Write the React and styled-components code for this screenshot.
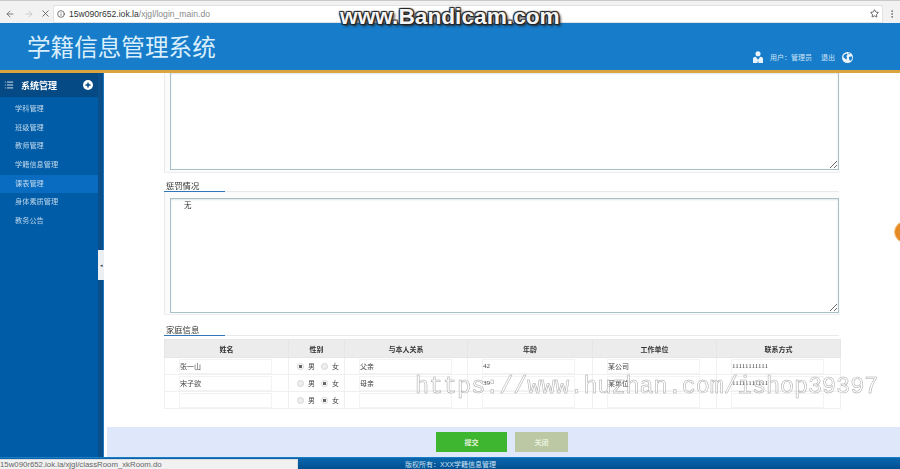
import styled, { createGlobalStyle } from 'styled-components';
import { ArrowLeft, ArrowRight, X, Info, Star, MoreVertical, List } from 'lucide-react';

const CJK = `"Liberation Sans", "Noto Sans CJK SC", sans-serif`;
const CJK_SERIF = `"Liberation Serif", "Noto Sans CJK SC", serif`;

const GlobalStyle = createGlobalStyle`
  html, body { margin: 0; padding: 0; background: #fff; }
  * { box-sizing: border-box; }
  body { font-family: ${CJK}; overflow: hidden; }
`;

const Page = styled.div`
  position: relative;
  width: 900px;
  height: 469px;
  display: flex;
  flex-direction: column;
  overflow: hidden;
  filter: blur(0.4px);
`;

const Chrome = styled.div`
  height: 23px;
  flex: none;
  display: flex;
  align-items: center;
  padding: 3px 0 0 0;
  background: #f2f2f2;
  border-top: 1px solid #c9c9c9;
  color: #666;
`;

const NavIcon = styled.span`
  width: ${({ $w }) => $w || 19}px;
  display: flex;
  justify-content: center;
  color: ${({ $faint }) => ($faint ? '#c4c4c4' : '#666')};
`;

const UrlBar = styled.div`
  width: 830px;
  height: 18px;
  display: flex;
  align-items: center;
  gap: 4px;
  padding: 0 3px;
  background: #fff;
  border: 1px solid #e2e2e2;
  font-size: 8.6px;
  color: #333;
`;

const UrlPath = styled.span`
  color: #8a8a8a;
`;

const UrlGrow = styled.span`
  flex: 1;
`;

const Header = styled.header`
  height: 50px;
  flex: none;
  display: flex;
  align-items: flex-end;
  justify-content: space-between;
  padding: 0 47px 0 27px;
  background: #177cc9;
  border-bottom: 3px solid #dca43e;
  color: #fff;
`;

const Title = styled.h1`
  margin: 0 0 7px;
  font-size: 23.6px;
  line-height: 30px;
  font-weight: 400;
  color: #d9effd;
`;

const UserBar = styled.div`
  display: flex;
  align-items: center;
  margin-bottom: 7px;
  font-size: 7px;
  color: #cfe4f6;
`;

const UserName = styled.span`
  margin: 0 9px 0 7px;
`;

const GlobeWrap = styled.span`
  display: flex;
  margin-left: 7px;
`;

const Body = styled.div`
  flex: 1;
  min-height: 0;
  display: flex;
`;

const Sidebar = styled.aside`
  position: relative;
  width: 104px;
  flex: none;
  padding-right: 5px;
  background: #005ca6;
  border-right: 1px solid #1b78c0;
  box-shadow: inset -5px 0 0 #0b4f8a;
`;

const SideTitle = styled.div`
  height: 24px;
  display: flex;
  align-items: center;
  padding: 0 5px 0 4px;
  background: #064a85;
  color: #fff;
  font-size: 9px;
  font-weight: 700;
`;

const SideTitleText = styled.span`
  flex: 1;
  margin-left: 7px;
`;

const SideList = styled.ul`
  list-style: none;
  margin: 3px 0 0;
  padding: 0;
`;

const SideItem = styled.li`
  height: 18.7px;
  line-height: 18.7px;
  padding-left: 15px;
  font-size: 7.2px;
  color: #bcd6ec;
  background: ${({ $active }) => ($active ? '#0a6cc0' : 'transparent')};
`;

const Toggle = styled.div`
  position: absolute;
  right: -1px;
  top: 177px;
  width: 6px;
  height: 30px;
  display: flex;
  align-items: center;
  justify-content: center;
  background: #edf0f3;
  color: #444;
  font-size: 5px;
`;

const Main = styled.main`
  flex: 1;
  min-width: 0;
  display: flex;
  flex-direction: column;
`;

const Scroll = styled.div`
  flex: 1;
  min-height: 0;
  padding: 0 60px;
  overflow: hidden;
`;

const AreaBox = styled.div`
  height: ${({ $h }) => $h}px;
  padding: ${({ $pt }) => $pt || 0}px 1px ${({ $pb }) => $pb}px 5px;
  border-left: 1px solid #eaeaea;
  border-bottom: 1px solid #eee;
  background: #fbfbfb;
`;

const Area = styled.textarea`
  display: block;
  width: 100%;
  height: 100%;
  padding: 0 13px;
  resize: both;
  background: #fff;
  border: 1px solid #a9c0c6;
  border-top-width: ${({ $noTop }) => ($noTop ? 0 : 1)}px;
  box-shadow: inset 0 1px 2px rgba(120, 150, 160, 0.25);
  outline: none;
  font-family: ${CJK};
  font-size: 7.5px;
  color: #333;
`;

const SectionHead = styled.div`
  height: ${({ $h }) => $h}px;
  display: flex;
  align-items: flex-end;
  border-bottom: 1px solid #e9e9e9;
  margin-right: 1px;
`;

const SectionTitle = styled.h3`
  margin: 0 0 -1px;
  width: 61px;
  padding: 0 0 0 2px;
  border-bottom: 1px solid #2f78b8;
  font-size: 8.3px;
  line-height: 10px;
  font-weight: 400;
  color: #333;
`;

const Table = styled.table`
  width: 676px;
  margin-top: ${({ $mt }) => $mt}px;
  border-collapse: collapse;
  table-layout: fixed;
  font-size: 7px;
  color: #444;
`;

const Th = styled.th`
  height: 18px;
  padding: 0;
  background: #ececec;
  border: 1px solid #e6e6e6;
  font-size: 7px;
  font-weight: 700;
  color: #333;
`;

const Td = styled.td`
  height: 17px;
  padding: 0;
  border: 1px solid #f0f0f0;
  text-align: center;
`;

const TextInput = styled.input`
  display: block;
  width: 93px;
  height: 15px;
  margin: 0 0 0 14px;
  padding: 0;
  background: #fff;
  border: 1px solid #f3f3f3;
  outline: none;
  font-family: ${CJK_SERIF};
  font-size: 7px;
  color: #444;
`;

const RadioGroup = styled.div`
  display: flex;
  align-items: center;
  justify-content: center;
  gap: 3px;
`;

const Radio = styled.input`
  appearance: none;
  width: 7px;
  height: 7px;
  margin: 0 1px 0 3px;
  border-radius: 50%;
  border: 1px solid #d4d4d4;
  background: #eee;

  &:checked {
    background: radial-gradient(circle, #666 0 1.6px, #fff 2px);
  }
`;

const Actions = styled.div`
  height: 30px;
  flex: none;
  margin-left: 3px;
  display: flex;
  align-items: center;
  padding-left: 329px;
  gap: 8px;
  background: #dfe8fa;
`;

const Button = styled.button`
  width: ${({ $w }) => $w}px;
  height: 20px;
  padding: 0;
  border: 0;
  color: #e6f2dc;
  background: ${({ $bg }) => $bg};
  font-family: ${CJK};
  font-size: 7px;
  font-weight: 700;
`;

const Footer = styled.footer`
  height: 12px;
  flex: none;
  display: flex;
  align-items: center;
  padding-left: 405px;
  background: linear-gradient(#0a66ad, #004f90);
  border-top: 1px solid #1a7cc4;
  font-size: 7px;
  color: #cfe2f2;
`;

const StatusBubble = styled.div`
  position: absolute;
  left: 0;
  bottom: 0;
  width: 298px;
  height: 10px;
  line-height: 10px;
  background: #f1f1f1;
  border-top: 1px solid #ddd;
  border-right: 1px solid #ddd;
  font-size: 7.8px;
  color: #666;
`;

const Bandicam = styled.div`
  position: absolute;
  left: 340px;
  top: 3px;
  font-family: "Liberation Sans", sans-serif;
  font-size: 22.7px;
  line-height: 26px;
  font-weight: 700;
  color: #f4f4f4;
  text-shadow: 1px 1px 1px #222, -1px -1px 1px #222, 1px -1px 1px #222, -1px 1px 1px #222, 2px 2px 3px #222;
`;

const Huzhan = styled.div`
  position: absolute;
  left: 415px;
  top: 373px;
  font-family: "Liberation Mono", monospace;
  font-size: 23.4px;
  line-height: 28px;
  color: rgba(255, 255, 255, 0.5);
  -webkit-text-stroke: 0.5px #a6a6a6;
  white-space: nowrap;
`;

const OrangeDot = styled.div`
  position: absolute;
  left: 894px;
  top: 221px;
  width: 22px;
  height: 22px;
  border-radius: 50%;
  background: #e58a25;
  border: 1px solid #f3c78a;
`;

const UserIcon = () => (
  <svg width="10" height="12" viewBox="0 0 11 13" fill="#e8f2fa">
    <circle cx="5.5" cy="3" r="2.8" />
    <path d="M0 13V8.5C0 7 1.2 6.4 3 6.2L5.5 9.5 8 6.2c1.8.2 3 .8 3 2.3V13H6.2L5.5 10.5 4.8 13z" />
  </svg>
);

const GlobeIcon = () => (
  <svg width="11" height="11" viewBox="0 0 12 12">
    <circle cx="6" cy="6" r="6" fill="#eef5fb" />
    <path d="M2 3.2 5 1.6 6.2 3 4.6 4.4 5.6 6 4.6 8.4 3.4 7 1.4 5.6zM7.6 5.4l2.8-.8.8 2.2-1.6 2.8-1.4-.6-.6-2.4zM6.6 1l2.4.6-1.2 1z" fill="#177cc9" />
  </svg>
);

const PlusDot = () => (
  <svg width="10" height="10" viewBox="0 0 10 10">
    <circle cx="5" cy="5" r="5" fill="#fff" />
    <path d="M5 2.4v5.2M2.4 5h5.2" stroke="#064a85" strokeWidth="1.5" />
  </svg>
);

const menu = ['学科管理', '班级管理', '教师管理', '学籍信息管理', '课表管理', '身体素质管理', '教务公告'];

const columns = [
  ['姓名', 124],
  ['性别', 56],
  ['与本人关系', 123],
  ['年龄', 125],
  ['工作单位', 124],
  ['联系方式', 124],
];

const family = [
  { name: '张一山', sex: 'm', rel: '父亲', age: '42', work: '某公司', tel: '11111111111' },
  { name: '宋子欲', sex: 'f', rel: '母亲', age: '39', work: '某单位', tel: '11111111111' },
  { name: '', sex: 'f', rel: '', age: '', work: '', tel: '' },
];

export default function App() {
  return (
    <Page>
      <GlobalStyle />
      <Chrome>
        <NavIcon><ArrowLeft size={10} /></NavIcon>
        <NavIcon $faint><ArrowRight size={10} /></NavIcon>
        <NavIcon $w={15}><X size={11} /></NavIcon>
        <UrlBar>
          <Info size={8} />
          <span>15w090r652.iok.la<UrlPath>/xjgl/login_main.do</UrlPath></span>
          <UrlGrow />
          <Star size={9} />
        </UrlBar>
        <NavIcon $w={17}><MoreVertical size={10} /></NavIcon>
      </Chrome>

      <Header>
        <Title>学籍信息管理系统</Title>
        <UserBar>
          <UserIcon />
          <UserName>用户：管理员</UserName>
          <span>退出</span>
          <GlobeWrap><GlobeIcon /></GlobeWrap>
        </UserBar>
      </Header>

      <Body>
        <Sidebar>
          <SideTitle>
            <List size={10} />
            <SideTitleText>系统管理</SideTitleText>
            <PlusDot />
          </SideTitle>
          <SideList>
            {menu.map((m) => (
              <SideItem key={m} $active={m === '课表管理'}>{m}</SideItem>
            ))}
          </SideList>
          <Toggle>◂</Toggle>
        </Sidebar>

        <Main>
          <Scroll>
            <AreaBox $h={100} $pb={2}>
              <Area $noTop readOnly defaultValue="" />
            </AreaBox>
            <SectionHead $h={19}><SectionTitle>惩罚情况</SectionTitle></SectionHead>
            <AreaBox $h={123} $pt={6} $pb={1}>
              <Area readOnly defaultValue="无" />
            </AreaBox>
            <SectionHead $h={21}><SectionTitle>家庭信息</SectionTitle></SectionHead>
            <Table $mt={3}>
              <colgroup>
                {columns.map(([label, w]) => <col key={label} width={w} />)}
              </colgroup>
              <thead>
                <tr>{columns.map(([label]) => <Th key={label}>{label}</Th>)}</tr>
              </thead>
              <tbody>
                {family.map((f, i) => (
                  <tr key={i}>
                    <Td><TextInput readOnly defaultValue={f.name} /></Td>
                    <Td>
                      <RadioGroup>
                        <Radio type="radio" name={`sex${i}`} defaultChecked={f.sex === 'm'} />男
                        <Radio type="radio" name={`sex${i}`} defaultChecked={f.sex === 'f'} />女
                      </RadioGroup>
                    </Td>
                    <Td><TextInput readOnly defaultValue={f.rel} /></Td>
                    <Td><TextInput readOnly defaultValue={f.age} /></Td>
                    <Td><TextInput readOnly defaultValue={f.work} /></Td>
                    <Td><TextInput readOnly defaultValue={f.tel} /></Td>
                  </tr>
                ))}
              </tbody>
            </Table>
          </Scroll>
          <Actions>
            <Button $w={71} $bg="#3fb62f">提交</Button>
            <Button $w={53} $bg="#bcc8a4">关闭</Button>
          </Actions>
        </Main>
      </Body>

      <Footer>版权所有：XXX学籍信息管理</Footer>
      <StatusBubble>15w090r652.iok.la/xjgl/classRoom_xkRoom.do</StatusBubble>
      <Bandicam>www.Bandicam.com</Bandicam>
      <Huzhan>https://www.huzhan.com/ishop39397</Huzhan>
      <OrangeDot />
    </Page>
  );
}
